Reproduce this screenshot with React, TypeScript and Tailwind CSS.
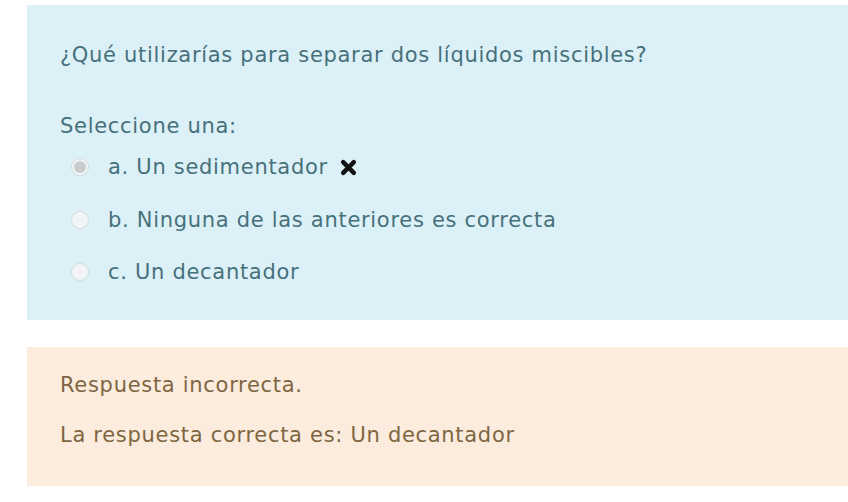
import React from "react";

function Radio({ checked }: { checked?: boolean }) {
  return (
    <span className="flex h-[18px] w-[18px] items-center justify-center rounded-full border border-[#d3dadd] bg-[#f2f5f6]">
      {checked ? <span className="h-[12px] w-[12px] rounded-full bg-[#c8cccf]" /> : null}
    </span>
  );
}

function Cross() {
  return (
    <svg width="17" height="17" viewBox="0 0 16 16" className="ml-[12px]">
      <path d="M3 3 L13 13 M13 3 L3 13" stroke="#111" strokeWidth="4.2" strokeLinecap="round" />
    </svg>
  );
}

export default function App() {
  const options = [
    { label: "a. Un sedimentador", checked: true, wrong: true },
    { label: "b. Ninguna de las anteriores es correcta" },
    { label: "c. Un decantador" },
  ];
  return (
    <div
      className="h-[502px] w-[848px] bg-white pl-[27px] pt-[5px]"
      style={{ fontFamily: "'DejaVu Sans', 'Noto Sans', sans-serif" }}
    >
      <div className="h-[315px] bg-[#dcf0f8] pl-[33px] pt-[36px] text-[21px] leading-[28px] tracking-[0.7px] text-[#46717b]">
        <div>¿Qué utilizarías para separar dos líquidos miscibles?</div>
        <div className="mt-[43px]">Seleccione una:</div>
        <div className="mt-[13px] flex flex-col gap-[24.5px]">
          {options.map((o) => (
            <div key={o.label} className="flex h-[28px] items-center">
              <span className="ml-[11px] mr-[19px]">
                <Radio checked={o.checked} />
              </span>
              <span>{o.label}</span>
              {o.wrong ? <Cross /> : null}
            </div>
          ))}
        </div>
      </div>
      <div className="mt-[27px] h-[139px] bg-[#fcecdd] pl-[33px] pt-[24px] text-[21px] leading-[28px] tracking-[0.7px] text-[#7e6642]">
        <div>Respuesta incorrecta.</div>
        <div className="mt-[22px]">La respuesta correcta es: Un decantador</div>
      </div>
    </div>
  );
}
